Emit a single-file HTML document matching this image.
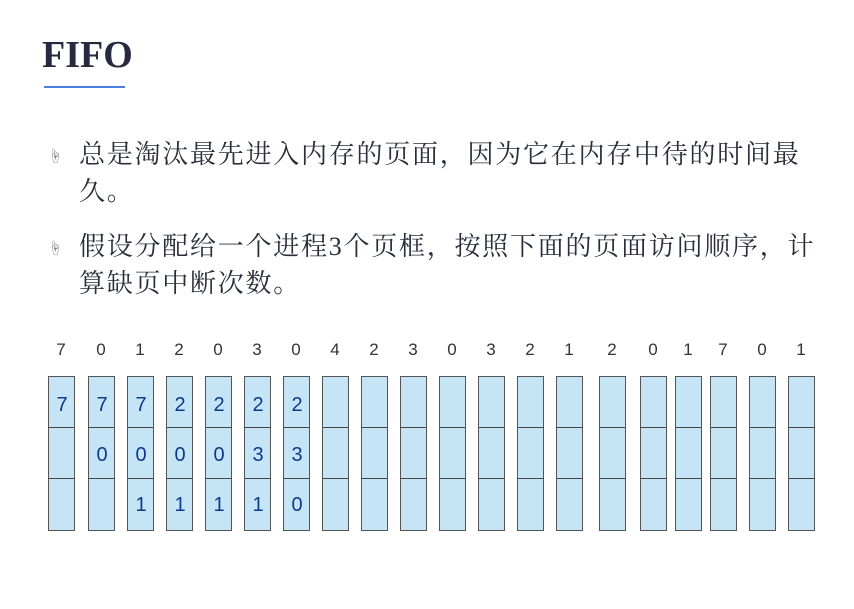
<!DOCTYPE html><html><head><meta charset="utf-8"><style>
body{margin:0;width:854px;height:609px;background:#fff;position:relative;overflow:hidden;font-family:"Liberation Serif","Noto Serif CJK SC",serif;color:#2a2d3a}
.t{position:absolute;left:42px;top:33px;font-size:38px;font-weight:bold;color:#262a3e}
.u{position:absolute;left:44px;top:86px;width:81px;height:2px;background:#4a7fe0}
.p{position:absolute;left:79px;font-size:26px;line-height:37px;width:780px;white-space:nowrap;letter-spacing:1.75px}
.b{position:absolute;left:48px;font-size:14px;color:#777}
.n{position:absolute;top:340px;font-family:"Liberation Sans",sans-serif;font-size:17px;color:#333;width:26px;text-align:center}
.c{position:absolute;top:376px;width:25px;height:153px;background:#c5e4f6;border:1px solid #555}
.c i{position:absolute;left:0;width:25px;height:1px;background:#444}
.h{position:absolute;font-family:"Liberation Sans",sans-serif;font-size:20px;color:#0e3a8c;width:26px;text-align:center}
</style></head><body>
<div class="t">FIFO</div><div class="u"></div>
<div class="b" style="top:146px">☝</div>
<div class="p" style="top:136px">总是淘汰最先进入内存的页面，因为它在内存中待的时间最<br>久。</div>
<div class="b" style="top:238px">☝</div>
<div class="p" style="top:228px">假设分配给一个进程3个页框，按照下面的页面访问顺序，计<br>算缺页中断次数。</div>
<div id="g"></div>
<script>
var xs=[48,88,127,166,205,244,283,322,361,400,439,478,517,556,599,640,675,710,749,788];
var ns="70120304230321201701";
var hw=[["7","",""],["7","0",""],["7","0","1"],["2","0","1"],["2","0","1"],["2","3","1"],["2","3","0"]];
var h="";
xs.forEach(function(x,i){
h+='<div class="n" style="left:'+x+'px">'+ns[i]+'</div>';
h+='<div class="c" style="left:'+x+'px"><i style="top:50px"></i><i style="top:101px"></i></div>';
if(hw[i]){[0,1,2].forEach(function(r){if(hw[i][r])h+='<div class="h" style="left:'+(x+1)+'px;top:'+(394+r*50)+'px">'+hw[i][r]+'</div>';});}
});
document.getElementById('g').innerHTML=h;
</script>
</body></html>
